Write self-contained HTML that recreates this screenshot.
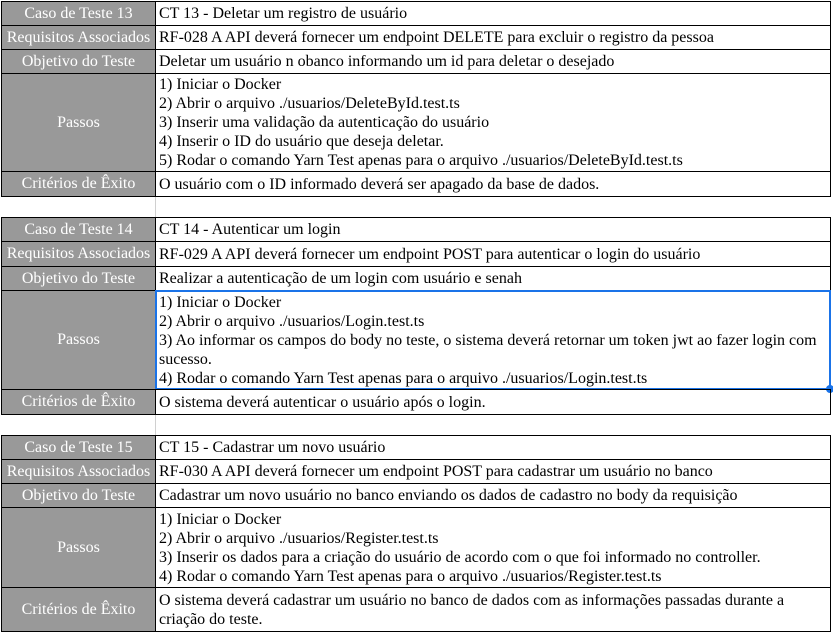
<!DOCTYPE html>
<html><head><style>
body{margin:0;width:833px;height:632px;background:#fff;position:relative;overflow:hidden;font-family:"Liberation Serif","Times New Roman",serif;font-size:16px;color:#000}
.l,.r{position:absolute;box-sizing:border-box;border:1px solid #000}
.l{left:1px;width:155px;background:#999;color:#fff;display:flex;align-items:center;justify-content:center;text-align:center;white-space:nowrap}
.r{left:155px;width:676px;padding:0 3px;line-height:19px;display:flex;flex-direction:column;justify-content:center}
.gv{position:absolute;width:0;border-left:1px solid #d0d0d0}
</style></head><body>
<div class="gv" style="left:155px;top:196px;height:21px"></div>
<div class="gv" style="left:155px;top:414px;height:21px"></div>

<div class="l" style="top:1px;height:25px">Caso de Teste 13</div><div class="r" style="top:1px;height:25px">CT 13 - Deletar um registro de usuário</div>
<div class="l" style="top:25px;height:25px">Requisitos Associados</div><div class="r" style="top:25px;height:25px">RF-028 A API deverá fornecer um endpoint DELETE para excluir o registro da pessoa</div>
<div class="l" style="top:49px;height:25px">Objetivo do Teste</div><div class="r" style="top:49px;height:25px">Deletar um usuário n obanco informando um id para deletar o desejado</div>
<div class="l" style="top:73px;height:99px">Passos</div><div class="r" style="top:73px;height:99px"><div>1) Iniciar o Docker</div><div>2) Abrir o arquivo ./usuarios/DeleteById.test.ts</div><div>3) Inserir uma validação da autenticação do usuário</div><div>4) Inserir o ID do usuário que deseja deletar.</div><div>5) Rodar o comando Yarn Test apenas para o arquivo ./usuarios/DeleteById.test.ts</div></div>
<div class="l" style="top:171px;height:26px">Critérios de Êxito</div><div class="r" style="top:171px;height:26px">O usuário com o ID informado deverá ser apagado da base de dados.</div>

<div class="l" style="top:217px;height:25px">Caso de Teste 14</div><div class="r" style="top:217px;height:25px">CT 14 - Autenticar um login</div>
<div class="l" style="top:241px;height:26px">Requisitos Associados</div><div class="r" style="top:241px;height:26px">RF-029 A API deverá fornecer um endpoint POST para autenticar o login do usuário</div>
<div class="l" style="top:266px;height:25px">Objetivo do Teste</div><div class="r" style="top:266px;height:25px">Realizar a autenticação de um login com usuário e senah</div>
<div class="l" style="top:290px;height:100px">Passos</div><div class="r" style="top:290px;height:100px;border:2px solid #1a73e8;padding-left:2px"><div>1) Iniciar o Docker</div><div>2) Abrir o arquivo ./usuarios/Login.test.ts</div><div>3) Ao informar os campos do body no teste, o sistema deverá retornar um token jwt ao fazer login com sucesso.</div><div>4) Rodar o comando Yarn Test apenas para o arquivo ./usuarios/Login.test.ts</div></div>
<div style="position:absolute;left:826px;top:385px;width:8px;height:8px;border-radius:50%;background:#1a73e8"></div>
<div class="l" style="top:389px;height:26px">Critérios de Êxito</div><div class="r" style="top:389px;height:26px">O sistema deverá autenticar o usuário após o login.</div>

<div class="l" style="top:435px;height:25px">Caso de Teste 15</div><div class="r" style="top:435px;height:25px">CT 15 - Cadastrar um novo usuário</div>
<div class="l" style="top:459px;height:25px">Requisitos Associados</div><div class="r" style="top:459px;height:25px">RF-030 A API deverá fornecer um endpoint POST para cadastrar um usuário no banco</div>
<div class="l" style="top:483px;height:25px">Objetivo do Teste</div><div class="r" style="top:483px;height:25px">Cadastrar um novo usuário no banco enviando os dados de cadastro no body da requisição</div>
<div class="l" style="top:507px;height:81px">Passos</div><div class="r" style="top:507px;height:81px"><div>1) Iniciar o Docker</div><div>2) Abrir o arquivo ./usuarios/Register.test.ts</div><div>3) Inserir os dados para a criação do usuário de acordo com o que foi informado no controller.</div><div>4) Rodar o comando Yarn Test apenas para o arquivo ./usuarios/Register.test.ts</div></div>
<div class="l" style="top:587px;height:45px">Critérios de Êxito</div><div class="r" style="top:587px;height:45px">O sistema deverá cadastrar um usuário no banco de dados com as informações passadas durante a criação do teste.</div>
</body></html>
